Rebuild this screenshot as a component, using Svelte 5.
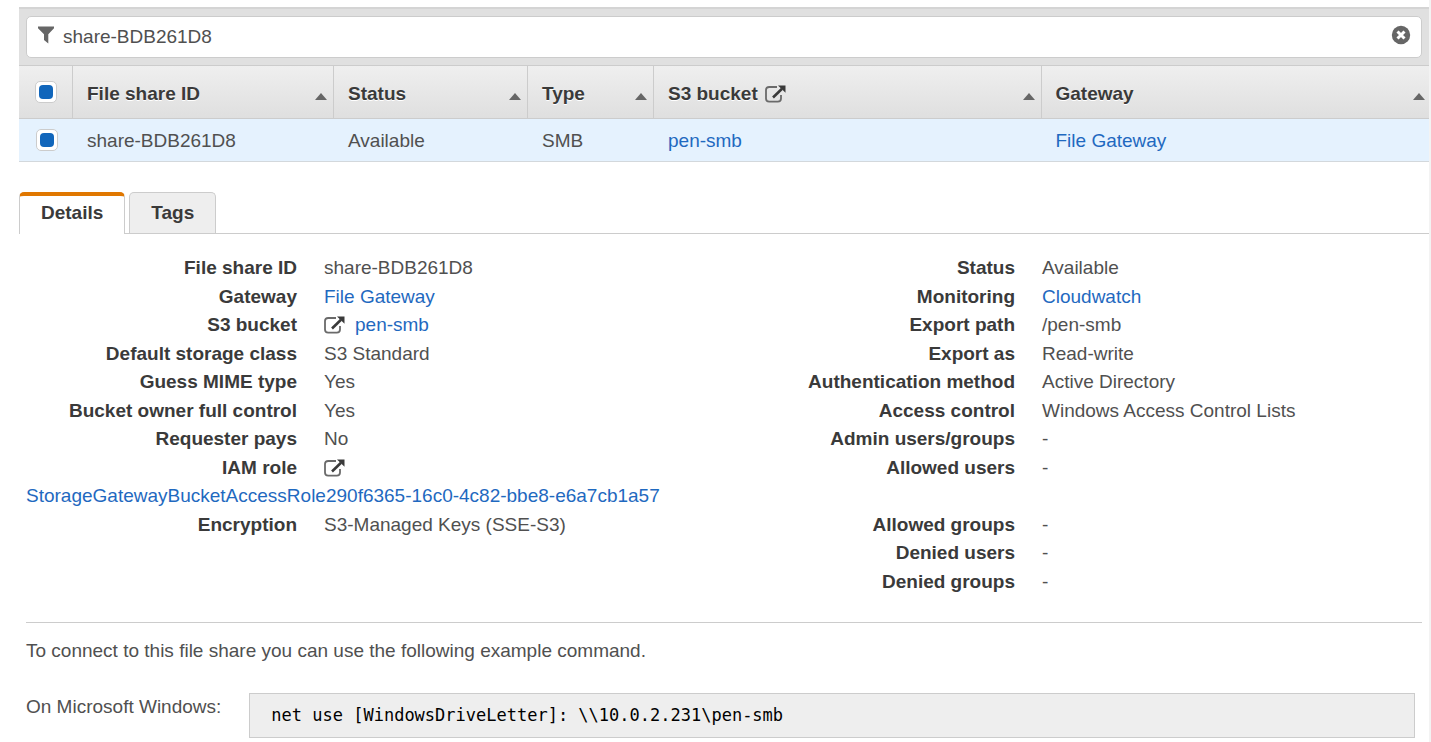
<script>
  let filter = $state('share-BDB261D8');
  let activeTab = $state('Details');
  let selected = $state(true);

  const columns = ['File share ID', 'Status', 'Type', 'S3 bucket', 'Gateway'];
  const tabs = ['Details', 'Tags'];

  const rows = [
    [{ label: 'File share ID', text: 'share-BDB261D8' }, { label: 'Status', text: 'Available' }],
    [{ label: 'Gateway', text: 'File Gateway', link: true }, { label: 'Monitoring', text: 'Cloudwatch', link: true }],
    [{ label: 'S3 bucket', text: 'pen-smb', link: true, external: true }, { label: 'Export path', text: '/pen-smb' }],
    [{ label: 'Default storage class', text: 'S3 Standard' }, { label: 'Export as', text: 'Read-write' }],
    [{ label: 'Guess MIME type', text: 'Yes' }, { label: 'Authentication method', text: 'Active Directory' }],
    [{ label: 'Bucket owner full control', text: 'Yes' }, { label: 'Access control', text: 'Windows Access Control Lists' }],
    [{ label: 'Requester pays', text: 'No' }, { label: 'Admin users/groups', text: '-' }],
    [
      { label: 'IAM role', external: true, below: 'StorageGatewayBucketAccessRole290f6365-16c0-4c82-bbe8-e6a7cb1a57' },
      { label: 'Allowed users', text: '-' }
    ],
    [{ label: 'Encryption', text: 'S3-Managed Keys (SSE-S3)' }, { label: 'Allowed groups', text: '-' }],
    [null, { label: 'Denied users', text: '-' }],
    [null, { label: 'Denied groups', text: '-' }]
  ];

  const command = 'net use [WindowsDriveLetter]: \\\\10.0.2.231\\pen-smb';
</script>

{#snippet externalIcon()}
  <svg class="external" width="21" height="18" viewBox="0 0 21 18" aria-hidden="true">
    <path d="M12 2H4.2Q1 2 1 5v8.5Q1 16.7 4.2 16.7h8.6q3.2 0 3.2-3.2V10" fill="none" stroke="#6a6a6a" stroke-width="1.8" />
    <path d="M8 12.5L17 3.8" stroke="#3a3a3a" stroke-width="2.6" />
    <path d="M13 0.5h7.5v7.2z" fill="#3a3a3a" />
  </svg>
{/snippet}

{#snippet value(item)}
  {#if item.external}{@render externalIcon()}{/if}
  {#if item.link}<a href="#top">{item.text}</a>{:else if item.text}{item.text}{/if}
{/snippet}

<main>
  <div class="filter-bar">
    <div class="filter-box">
      <svg width="18" height="18" viewBox="0 0 18 18" aria-hidden="true">
        <path d="M1 0.5h16v1.8L11.3 8.2V17.5L7 14V8.2L1 2.3z" fill="#666" />
      </svg>
      <input type="text" aria-label="Filter file shares" bind:value={filter} />
      <button class="clear" aria-label="Clear filter" onclick={() => (filter = '')}>
        <svg width="20" height="20" viewBox="0 0 20 20" aria-hidden="true">
          <circle cx="10" cy="10" r="9.2" fill="#666" />
          <path d="M6.5 6.5l7 7M13.5 6.5l-7 7" stroke="#fff" stroke-width="3" />
        </svg>
      </button>
    </div>
  </div>

  <table>
    <colgroup>
      <col class="c-check" /><col class="c-id" /><col class="c-status" /><col class="c-type" /><col /><col />
    </colgroup>
    <thead>
      <tr>
        <th class="check"><input type="checkbox" aria-label="Select all" bind:checked={selected} /></th>
        {#each columns as column}
          <th>
            <button class="sort">
              <span>{column}</span>
              {#if column === 'S3 bucket'}{@render externalIcon()}{/if}
              <svg class="arrow" width="12" height="7" viewBox="0 0 12 7" aria-hidden="true">
                <path d="M6 0l6 7H0z" fill="#666" />
              </svg>
            </button>
          </th>
        {/each}
      </tr>
    </thead>
    <tbody>
      <tr>
        <td class="check"><input type="checkbox" aria-label="Select share-BDB261D8" bind:checked={selected} /></td>
        <td>share-BDB261D8</td>
        <td>Available</td>
        <td>SMB</td>
        <td><a href="#top">pen-smb</a></td>
        <td><a href="#top">File Gateway</a></td>
      </tr>
    </tbody>
  </table>

  <div class="tabs" role="tablist">
    {#each tabs as tab}
      <button role="tab" aria-selected={activeTab === tab} class:active={activeTab === tab} onclick={() => (activeTab = tab)}>{tab}</button>
    {/each}
  </div>

  <section>
    <dl>
      {#each rows as [left, right]}
        {#if left}
          <dt class="left">{left.label}</dt>
          <dd>{@render value(left)}</dd>
        {/if}
        <dt class="right">{right.label}</dt>
        <dd>{@render value(right)}</dd>
        {#if left?.below}
          <dd class="below"><a href="#top">{left.below}</a></dd>
        {/if}
      {/each}
    </dl>

    <hr />
    <p>To connect to this file share you can use the following example command.</p>
    <div class="command">
      <span>On Microsoft Windows:</span>
      <code>{command}</code>
    </div>
  </section>
</main>

<style>
  :global(body) {
    background: #fff;
  }

  main {
    box-sizing: border-box;
    min-height: 100vh;
    padding: 7px 0 4px 19px;
    border-right: 2px solid #f3f3f3;
    color: #505050;
    font: 19px/24px "Liberation Sans", Arial, sans-serif;
  }

  a {
    color: #1f69c0;
    text-decoration: none;
  }

  button {
    padding: 0;
    border: 0;
    background: none;
    color: #3a3a3a;
    font: inherit;
    font-weight: bold;
    cursor: pointer;
  }

  .filter-bar {
    padding: 7px;
    border-top: 2px solid #d4d4d4;
    background: #e0e0e0;
  }

  .filter-box {
    display: flex;
    align-items: center;
    height: 42px;
    padding: 0 10px;
    border: 1px solid #ccc;
    border-radius: 5px;
    background: #fff;
    box-sizing: border-box;
    gap: 8px;
  }

  .filter-box input {
    flex: 1;
    min-width: 0;
    padding: 0;
    border: 0;
    outline: 0;
    background: none;
    color: #505050;
    font: inherit;
  }

  .filter-box svg {
    display: block;
    margin-bottom: 4px;
  }

  table {
    width: 100%;
    table-layout: fixed;
    border-collapse: separate;
    border-spacing: 0;
  }

  .c-check { width: 54px; }
  .c-id { width: 261px; }
  .c-status { width: 194px; }
  .c-type { width: 126px; }

  th,
  td {
    box-sizing: border-box;
    text-align: left;
  }

  th {
    height: 54px;
    padding: 4px 4px 0 14px;
    border: solid #ccc;
    border-width: 1px 1px 1px 0;
    background: linear-gradient(#efefef, #dfdfdf);
  }

  th:last-child {
    padding-right: 2px;
    border-right: 0;
  }

  td {
    height: 43px;
    padding: 2px 0 0 14px;
    border-bottom: 1px solid #d3d8dc;
    background: #e5f2fe;
  }

  .check {
    padding: 0 0 0 1px;
  }

  input[type="checkbox"] {
    appearance: none;
    display: block;
    width: 22px;
    height: 22px;
    margin: 0 auto;
    border: 1px solid #ccc;
    border-radius: 5px;
    background: #fff;
    box-sizing: border-box;
    padding: 3px;
  }

  input[type="checkbox"]:checked::before {
    content: "";
    display: block;
    height: 14px;
    border-radius: 4px;
    background: #1166bb;
  }

  .sort {
    display: flex;
    align-items: center;
    width: 100%;
    gap: 7px;
    text-shadow: 0 1px 0 #fff;
  }

  .arrow {
    margin: 4px 2px 0 auto;
  }

  .tabs {
    display: flex;
    gap: 4px;
    margin-top: 30px;
    border-bottom: 1px solid #ccc;
  }

  .tabs button {
    height: 41px;
    padding: 0 21px;
    border: 1px solid #ccc;
    border-bottom: 0;
    border-radius: 5px 5px 0 0;
    background: #eee;
  }

  .tabs .active {
    height: 42px;
    margin-bottom: -1px;
    padding-bottom: 4px;
    border-top: 4px solid #e07700;
    background: #fff;
  }

  section {
    padding: 20px 7px 0;
  }

  dl {
    display: grid;
    grid-template-columns: 271px 1fr 284px 1fr;
    column-gap: 27px;
    margin: 0;
    line-height: 1.5;
  }

  dt {
    color: #3a3a3a;
    font-weight: bold;
    text-align: right;
  }

  dt.left { grid-column: 1; }
  dt.right { grid-column: 3; }

  dd {
    display: flex;
    align-items: center;
    gap: 10px;
    margin: 0;
  }

  dd.below {
    grid-column: 1 / 3;
  }

  hr {
    margin: 26px 0 16px;
    border: 0;
    border-top: 1px solid #ccc;
  }

  p {
    margin: 0 0 30px;
  }

  .command {
    display: flex;
    gap: 28px;
    padding-right: 7px;
  }

  .command span {
    padding-top: 2px;
  }

  code {
    flex: 1;
    padding: 9px 21px;
    border: 1px solid #ccc;
    background: #eee;
    color: #000;
    font: 17px/25px "DejaVu Sans Mono", monospace;
  }
</style>
